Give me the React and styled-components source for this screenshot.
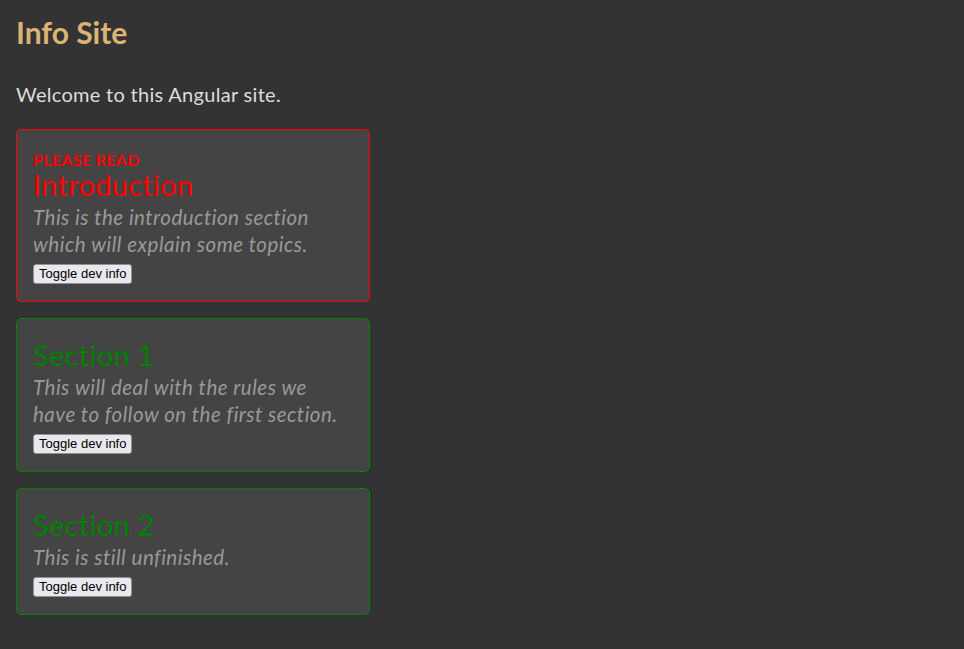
import React, { useState } from "react";
import styled, { createGlobalStyle } from "styled-components";

const GlobalStyle = createGlobalStyle`
  html, body {
    margin: 0;
    background: #333333;
  }
  body {
    font-family: Lato, "Open Sans", sans-serif;
  }
`;

const Page = styled.div`
  padding: 14px 16px 24px 16px;
  min-height: 649px;
  box-sizing: border-box;
`;

const Title = styled.h1`
  margin: 0 0 32px 0;
  font-size: 30px;
  font-weight: 700;
  color: #dbb473;
  line-height: 36px;
`;

const Welcome = styled.p`
  margin: 0 0 23px 0;
  font-size: 20px;
  letter-spacing: 0.3px;
  color: #dddddd;
  line-height: 24px;
`;

const CardList = styled.div`
  display: flex;
  flex-direction: column;
  gap: 16px;
  width: 354px;
`;

const Card = styled.section`
  background: #444444;
  border: 1px solid ${(p) => (p.$important ? "#ff0000" : "#008000")};
  border-radius: 5px;
  padding: 19px 16px 17px 16px;
  color: ${(p) => (p.$important ? "#ff0000" : "#008000")};
`;

const Kicker = styled.div`
  margin-top: 3px;
  font-size: 16px;
  font-weight: 700;
  text-transform: uppercase;
  line-height: 16px;
  letter-spacing: 0.3px;
`;

const CardTitle = styled.h2`
  margin: 0;
  font-size: 29px;
  font-weight: 400;
  letter-spacing: 0.3px;
  line-height: 34px;
`;

const Description = styled.p`
  margin: 2px 0 6px 0;
  max-width: 316px;
  font-size: 20.5px;
  font-style: italic;
  letter-spacing: 0.5px;
  color: #999999;
  line-height: 27px;
`;

const ToggleButton = styled.button`
  display: block;
  font-family: "Liberation Sans", Arial, sans-serif;
  font-size: 13px;
  padding: 1px 5px;
  color: #000;
  background: #e9e9ed;
  border: 1px solid #8f8f9d;
  border-radius: 3px;
  line-height: 16px;
  cursor: pointer;
`;

const DevInfo = styled.pre`
  margin: 6px 0 0 0;
  font-size: 12px;
  color: #bbb;
`;

const sections = [
  {
    id: "intro",
    important: true,
    title: "Introduction",
    text: "This is the introduction section which will explain some topics.",
  },
  {
    id: "s1",
    important: false,
    title: "Section 1",
    text: "This will deal with the rules we have to follow on the first section.",
  },
  {
    id: "s2",
    important: false,
    title: "Section 2",
    text: "This is still unfinished.",
  },
];

const InfoCard = ({ section }) => {
  const [dev, setDev] = useState(false);
  return (
    <Card $important={section.important}>
      {section.important && <Kicker>Please read</Kicker>}
      <CardTitle>{section.title}</CardTitle>
      <Description>{section.text}</Description>
      <ToggleButton onClick={() => setDev(!dev)}>Toggle dev info</ToggleButton>
      {dev && <DevInfo>{JSON.stringify(section, null, 2)}</DevInfo>}
    </Card>
  );
};

export default function App() {
  return (
    <>
      <GlobalStyle />
      <Page>
        <Title>Info Site</Title>
        <Welcome>Welcome to this Angular site.</Welcome>
        <CardList>
          {sections.map((s) => (
            <InfoCard key={s.id} section={s} />
          ))}
        </CardList>
      </Page>
    </>
  );
}
